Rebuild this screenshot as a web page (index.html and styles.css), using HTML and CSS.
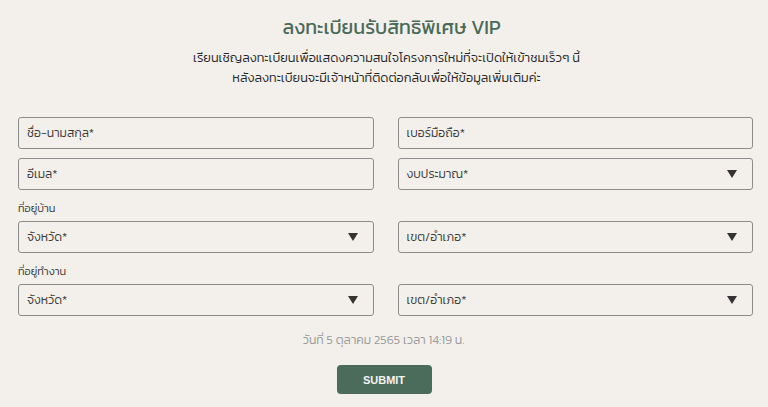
FILE: index.html
```html
<!DOCTYPE html>
<html lang="th">
<head>
<meta charset="utf-8">
<link rel="stylesheet" href="styles.css">
</head>
<body>
<main class="page">
  <header class="intro">
    <h1 class="title">ลงทะเบียนรับสิทธิพิเศษ VIP</h1>
    <p class="lead">เรียนเชิญลงทะเบียนเพื่อแสดงความสนใจโครงการใหม่ที่จะเปิดให้เข้าชมเร็วๆ นี้<br>หลังลงทะเบียนจะมีเจ้าหน้าที่ติดต่อกลับเพื่อให้ข้อมูลเพิ่มเติมค่ะ</p>
  </header>
  <form class="form">
    <div class="grid">
      <div class="field">ชื่อ-นามสกุล*</div>
      <div class="field">เบอร์มือถือ*</div>
      <div class="field">อีเมล*</div>
      <div class="field select">งบประมาณ*<svg class="arrow" viewBox="0 0 10 8" width="10" height="8"><path d="M0 0H10L5 8Z"/></svg></div>
      <div class="label">ที่อยู่บ้าน</div>
      <div class="field select">จังหวัด*<svg class="arrow" viewBox="0 0 10 8" width="10" height="8"><path d="M0 0H10L5 8Z"/></svg></div>
      <div class="field select">เขต/อำเภอ*<svg class="arrow" viewBox="0 0 10 8" width="10" height="8"><path d="M0 0H10L5 8Z"/></svg></div>
      <div class="label">ที่อยู่ทำงาน</div>
      <div class="field select">จังหวัด*<svg class="arrow" viewBox="0 0 10 8" width="10" height="8"><path d="M0 0H10L5 8Z"/></svg></div>
      <div class="field select">เขต/อำเภอ*<svg class="arrow" viewBox="0 0 10 8" width="10" height="8"><path d="M0 0H10L5 8Z"/></svg></div>
    </div>
    <p class="date">วันที่ 5 ตุลาคม 2565 เวลา 14:19 น.</p>
    <div class="actions"><button type="button" class="submit">SUBMIT</button></div>
  </form>
</main>
</body>
</html>
```

FILE: styles.css
```css
html, body {
  margin: 0;
  padding: 0;
  background: #f3f0ec;
}
body {
  font-family: "Kanit", "Noto Sans Thai", "Noto Sans", sans-serif;
  font-weight: 300;
  color: #333;
}
.page {
  padding: 12px 15px 0 18px;
}
.intro {
  text-align: center;
  padding-left: 2px;
}
.title {
  margin: 0;
  padding-left: 10px;
  font-size: 19.6px;
  font-weight: 400;
  color: #4a6a59;
  line-height: 30px;
}
.lead {
  margin: 6px 0 0;
  font-size: 12.8px;
  line-height: 20px;
  color: #262626;
}
.form {
  margin-top: 29px;
}
.grid {
  display: grid;
  grid-template-columns: 1fr 1fr;
  column-gap: 24px;
  row-gap: 9px;
}
.field {
  height: 32px;
  box-sizing: border-box;
  border: 1px solid #8c8c8c;
  border-radius: 3px;
  padding: 0 15px 0 8px;
  display: flex;
  align-items: center;
  justify-content: space-between;
  font-size: 12.3px;
  line-height: 20px;
  color: #3a3a3a;
}
.arrow {
  fill: #333;
  display: block;
}
.label {
  grid-column: 1 / -1;
  font-size: 11px;
  line-height: 14px;
  height: 14px;
  margin: 2px 0 -3px;
  color: #333;
}
.date {
  margin: 16px 0 0;
  text-align: center;
  font-size: 12.4px;
  line-height: 16px;
  color: #9a9a9a;
  padding-right: 4px;
}
.actions {
  display: flex;
  justify-content: center;
  margin-top: 17px;
  padding-right: 3px;
}
.submit {
  width: 95px;
  height: 29px;
  border: none;
  border-radius: 4px;
  background: #4b6b5b;
  color: #f4f4f4;
  font-family: "Liberation Sans", Arial, sans-serif;
  font-weight: 700;
  font-size: 11px;
  padding: 0;
}
```
